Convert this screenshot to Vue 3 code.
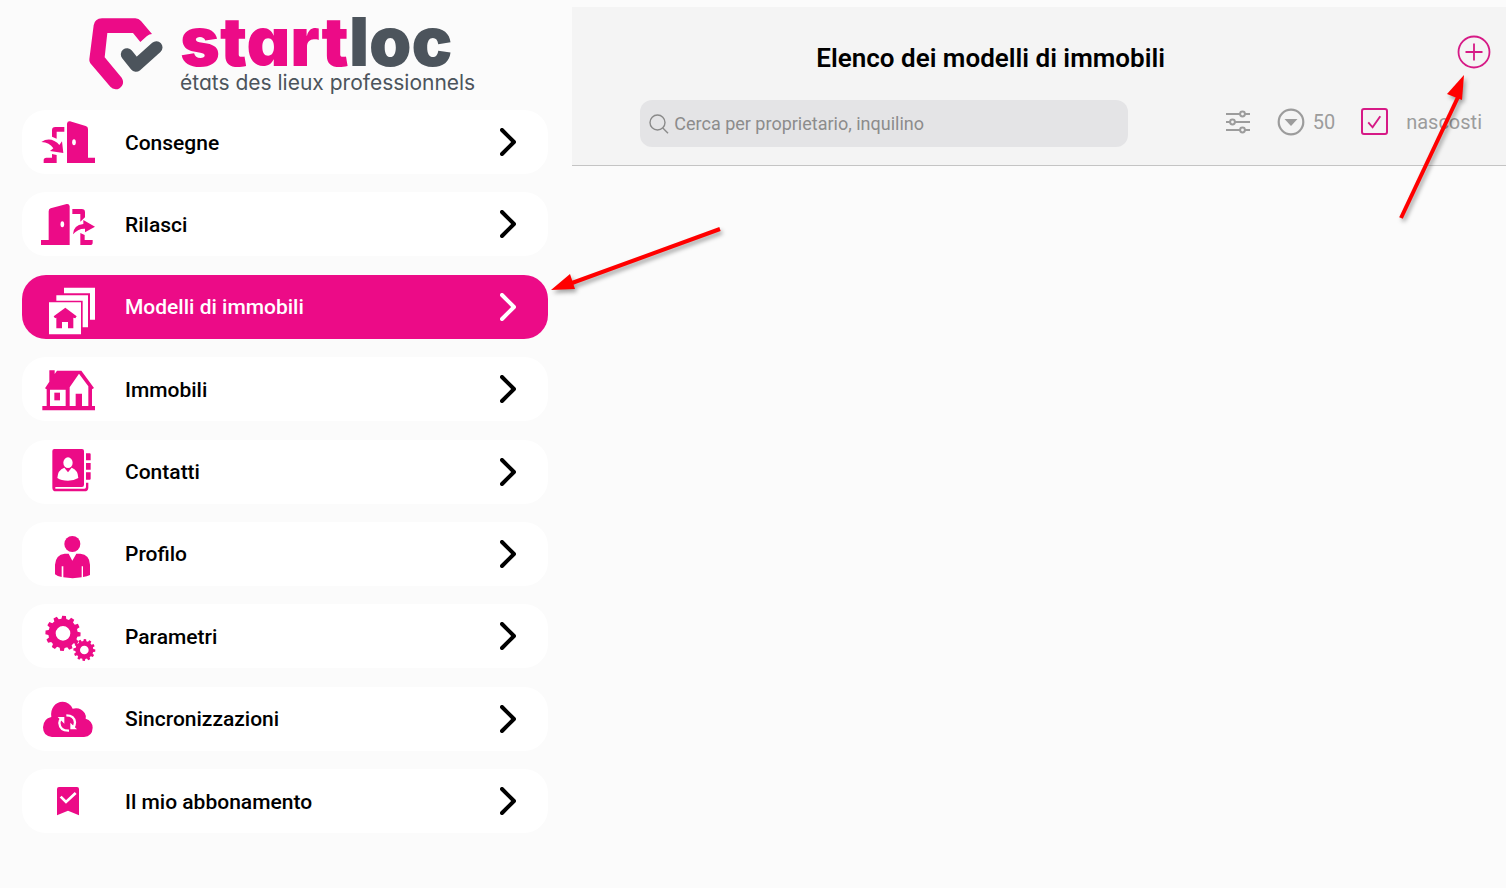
<script setup>
import { ref } from 'vue'

const items = [
  { id: 'consegne', label: 'Consegne', box: '48 15 192 192' },
  { id: 'rilasci', label: 'Rilasci', box: '48 261 192 192' },
  { id: 'modelli', label: 'Modelli di immobili', box: '48 29 192 192' },
  { id: 'immobili', label: 'Immobili', box: '48 276 192 192' },
  { id: 'contatti', label: 'Contatti', box: '48 29 192 192' },
  { id: 'profilo', label: 'Profilo', box: '48 276 192 192' },
  { id: 'parametri', label: 'Parametri', box: '48 27 192 192' },
  { id: 'sync', label: 'Sincronizzazioni', box: '48 276 192 192' },
  { id: 'abbonamento', label: 'Il mio abbonamento', box: '48 27 192 192' },
]
const active = ref('modelli')
const search = ref('')
const showHidden = ref(true)

function gear(cx, cy, outer, body, hole, teeth) {
  const pts = []
  const step = (Math.PI * 2) / teeth
  for (let i = 0; i < teeth; i++) {
    const a = i * step - Math.PI / 2 + 0.06
    for (const [r, k] of [[body, -0.32], [outer, -0.2], [outer, 0.2], [body, 0.32]]) {
      pts.push(`${(cx + r * Math.cos(a + k * step)).toFixed(1)} ${(cy + r * Math.sin(a + k * step)).toFixed(1)}`)
    }
  }
  return `M${pts.join('L')}ZM${cx - hole} ${cy}a${hole} ${hole} 0 1 0 ${hole * 2} 0a${hole} ${hole} 0 1 0 ${-hole * 2} 0Z`
}
const bigGear = gear(129, 115, 53, 44, 22, 12)
const smallGear = gear(193, 165, 33, 27, 13, 12)
</script>

<template>
  <div class="app">
    <aside class="side">
      <div class="logo">
        <svg class="mark" viewBox="54 51 228 222" aria-hidden="true">
          <path fill="#ec0b87" d="M96 55H196Q206 55 213 63L246 102Q238 102 231 108L211 126L189 99H112L104 172L155 233Q163 246 156 257Q149 268 137 268Q127 267 121 260L61 190Q57 185 58 178L71 76Q74 56 96 55Z" />
          <path fill="none" stroke="#4c545c" stroke-width="37" stroke-linecap="round" stroke-linejoin="round" d="M171 163L198 197L259 142" />
        </svg>
        <div class="words">
          <div class="brand">start<span>loc</span></div>
          <div class="tagline">états des lieux professionnels</div>
        </div>
      </div>

      <nav class="menu">
        <a
          v-for="item in items"
          :key="item.id"
          href="#"
          class="item"
          :class="{ active: item.id === active }"
          @click.prevent="active = item.id"
        >
          <svg class="icon" :viewBox="item.box" aria-hidden="true">
            <g v-if="item.id === 'consegne'" fill="currentColor">
              <path d="M141 56Q142 48 150 49L197 63Q204 65 204 72V158H225V174H141Z" />
              <ellipse cx="162" cy="112" rx="5.500" ry="9" fill="#fff" />
              <path d="M133 66V80H110V101L96 95V76Q96 66 106 66Z" />
              <path d="M64 111Q84 98 103 108Q113 113 118 120L126 109L130 144L90 138L100 130Q89 112 64 111Z" />
              <path d="M96 147L110 150V174H71V166Q71 158 79 158H96Z" />
            </g>
            <g v-else-if="item.id === 'rilasci'" fill="currentColor">
              <path d="M149 304Q148 296 140 297L92 310Q86 312 86 319V405H63V420H149Z" />
              <ellipse cx="127" cy="358" rx="5.500" ry="9" fill="#fff" />
              <path d="M157 312H185Q195 312 195 322V337L181 350V327H157Z" />
              <path d="M159 388Q160 360 190 357V345L225 365L195 382V371Q174 370 159 388Z" />
              <path d="M181 384L194 390V405H218V413Q218 420 210 420H181Z" />
            </g>
            <g v-else-if="item.id === 'modelli'" fill="currentColor">
              <path d="M132 67H225V163H210V84H132Z" />
              <path d="M109 90H204V186H188V106H109Z" />
              <path fill-rule="evenodd" d="M87 111H183V207H87ZM136 127L101 153L105 159L109 157V189H126V170H144V189H160V157L166 159L170 153Z" />
            </g>
            <g v-else-if="item.id === 'immobili'" fill="currentColor">
              <path fill-rule="evenodd" d="M88 316H104V327L111 317H184L222 369L216 373V423H225V436H67V423H80V373L75 370L88 350ZM90 374V423H137V374ZM149 367V423H167V386H186V423H205V364L177 326Z" />
              <path d="M103 383H120V406H103Z" />
            </g>
            <g v-else-if="item.id === 'contatti'" fill="currentColor">
              <path d="M103 56H186Q192 56 192 62V163Q192 170 186 170H106V175H193Q198 175 198 170V157H205V172Q205 183 193 183H108Q97 183 97 172V62Q97 56 103 56ZM198 69H209Q212 69 212 72V90H198ZM198 98H212V118H198ZM198 126H212V145Q212 148 209 148H198Z" />
              <ellipse cx="144" cy="97" rx="14" ry="16" fill="#fff" />
              <path fill="#fff" d="M133 112L144 126L155 112Q174 119 175 143Q162 151 144 151Q124 151 112 143Q113 119 133 112Z" />
            </g>
            <g v-else-if="item.id === 'profilo'" fill="currentColor">
              <circle cx="157" cy="342" r="24" />
              <path d="M134 371H146L157 392L169 371H181Q209 374 210 404V435Q201 440 189 441V409H185V442Q158 447 130 442V409H125V441Q112 439 105 433V404Q107 374 134 371Z" />
            </g>
            <g v-else-if="item.id === 'parametri'" fill="currentColor" fill-rule="evenodd">
              <path :d="bigGear" />
              <path :d="smallGear" />
            </g>
            <g v-else-if="item.id === 'sync'">
              <path fill="currentColor" d="M96 426Q69 424 69 397Q70 371 94 366C90 340 106 320 128 320Q149 321 158 341Q181 335 194 354Q199 362 197 371Q217 377 218 398Q217 424 192 426Z" />
              <g fill="none" stroke="#fff" stroke-width="7">
                <path d="M139 361Q163 361 165 382Q165 391 159 399" />
                <path d="M147 407Q120 408 118 384Q118 377 124 370" />
              </g>
              <path fill="#fff" d="M113 366H133V386ZM151 383V403H171Z" />
            </g>
            <g v-else>
              <path fill="currentColor" d="M111 87Q111 81 117 81H171Q177 81 177 87V166L144 152L111 166Z" />
              <path fill="none" stroke="#fff" stroke-width="8" d="M122 110L138 126L167 99" />
            </g>
          </svg>
          <span class="label">{{ item.label }}</span>
          <svg class="chevron" viewBox="0 0 16 28" aria-hidden="true">
            <path d="M2 2L14 14L2 26" />
          </svg>
          <svg v-if="item.id === 'modelli'" class="arrow arrow-item" viewBox="0 0 180 72" aria-hidden="true">
            <path d="M172 6L24 60" />
            <polygon points="3,67 22,51 27,66" />
          </svg>
        </a>
      </nav>
    </aside>

    <main class="content">
      <header class="head">
        <div class="title-row">
          <h1>Elenco dei modelli di immobili</h1>
          <button class="add" type="button" aria-label="Aggiungi">
            <svg viewBox="0 0 34 34" aria-hidden="true">
              <circle cx="17" cy="17" r="15.500" />
              <path d="M8.500 17H25.500M17 8.500V25.500" />
            </svg>
          </button>
        </div>
        <div class="tools">
          <label class="search">
            <svg viewBox="0 0 20 20" aria-hidden="true">
              <circle cx="8.500" cy="8.500" r="7.500" />
              <path d="M13.800 14L19 19.300" />
            </svg>
            <input v-model="search" type="text" placeholder="Cerca per proprietario, inquilino" aria-label="Cerca" />
          </label>
          <div class="filters">
            <button class="plain" type="button" aria-label="Filtri">
              <svg class="sliders" viewBox="0 0 26 24" aria-hidden="true">
                <path d="M1 4H15M20 4H25M1 12H5M10 12H25M1 20H15M20 20H25" />
                <circle cx="17.500" cy="4" r="2.400" />
                <circle cx="7.500" cy="12" r="2.400" />
                <circle cx="17.500" cy="20" r="2.400" />
              </svg>
            </button>
            <button class="plain count" type="button">
              <svg class="drop" viewBox="0 0 28 28" aria-hidden="true">
                <circle cx="14" cy="14" r="12.300" />
                <path d="M7.500 11H20.500L14 18Z" />
              </svg>
              50
            </button>
            <label class="hidden-toggle">
              <span class="box">
                <input v-model="showHidden" type="checkbox" />
                <svg v-if="showHidden" viewBox="0 0 28 28" aria-hidden="true">
                  <path d="M7.500 15L12 20L20 8.500" />
                </svg>
              </span>
              nascosti
            </label>
          </div>
        </div>
        <svg class="arrow arrow-add" viewBox="0 0 80 160" aria-hidden="true">
          <path d="M6 150L64 27" />
          <polygon points="69,7 52,26 67,32" />
        </svg>
      </header>
    </main>
  </div>
</template>

<style>
body {
  margin: 0;
  background: #fbfbfb;
}
</style>

<style scoped>
.app {
  display: grid;
  grid-template-columns: 38% 1fr;
  min-height: 100vh;
  font-family: Roboto, "Liberation Sans", sans-serif;
  color: #000;
}
.side {
  display: flex;
  flex-direction: column;
  box-sizing: border-box;
  padding: 0 24px 55px 22px;
}
.logo {
  display: flex;
  gap: 16px;
  height: 110px;
  padding-left: 66px;
}
.mark {
  width: 76px;
  height: 74px;
  margin-top: 17px;
}
.words {
  font-family: Inter, "DejaVu Sans", sans-serif;
  font-feature-settings: "cv11";
  font-optical-sizing: none;
  color: #4c545c;
  white-space: nowrap;
}
.brand {
  font-size: 68px;
  font-weight: 900;
  line-height: 60px;
  margin-top: 11px;
  color: #ec0b87;
}
.brand span {
  color: #4c545c;
}
.tagline {
  font-size: 21px;
  line-height: 24px;
}
.menu {
  flex: 1;
  display: flex;
  flex-direction: column;
  justify-content: space-between;
}
.item {
  position: relative;
  display: flex;
  align-items: center;
  height: 64px;
  padding: 0 32px 0 14px;
  border-radius: 24px;
  background: #fff;
  color: #000;
  text-decoration: none;
}
.icon {
  width: 64px;
  height: 64px;
  color: #ec0b87;
}
.label {
  flex: 1;
  padding-top: 1px;
  margin-left: 25px;
  font-size: 21px;
  font-weight: 500;
  line-height: 28px;
}
.chevron {
  width: 16px;
  height: 28px;
  fill: none;
  stroke: currentColor;
  stroke-width: 4;
  stroke-linecap: round;
  stroke-linejoin: round;
}
.active {
  background: #ec0b87;
  color: #fff;
}
.active .icon {
  color: #fff;
}
.arrow {
  position: absolute;
  z-index: 2;
  overflow: visible;
  pointer-events: none;
  fill: red;
  filter: drop-shadow(2px 3px 2px rgba(0, 0, 0, 0.35));
}
.arrow path {
  stroke: red;
  stroke-width: 4;
}
.arrow-item {
  left: 100%;
  bottom: 44px;
  width: 180px;
  height: 72px;
}
.head {
  position: relative;
  box-sizing: border-box;
  margin-top: 7px;
  height: 159px;
  border-bottom: 1px solid #c4c4c4;
  background: #f4f4f4;
}
.title-row {
  display: flex;
  align-items: flex-start;
  gap: 48px;
  padding: 28px 15px 0 0;
}
h1 {
  flex: 1;
  margin: 0;
  padding-top: 6px;
  text-align: center;
  font-size: 26px;
  font-weight: 600;
  line-height: 34px;
}
button {
  border: 0;
  padding: 0;
  background: none;
  font: inherit;
  color: inherit;
  cursor: pointer;
}
.add {
  width: 34px;
  height: 34px;
}
.add svg {
  display: block;
  fill: none;
  stroke: #d61a86;
  stroke-width: 1.8;
}
.tools {
  display: flex;
  justify-content: space-between;
  padding: 25px 24px 0 68px;
}
.search {
  display: flex;
  align-items: center;
  box-sizing: border-box;
  width: 488px;
  height: 47px;
  padding: 0 9px;
  gap: 5px;
  border-radius: 12px;
  background: #e4e4e6;
}
.search svg {
  width: 20px;
  height: 20px;
  fill: none;
  stroke: #8a8a8a;
  stroke-width: 1.4;
}
.search input {
  flex: 1;
  min-width: 0;
  border: 0;
  padding: 0;
  outline: 0;
  background: none;
  font: 18px/24px Roboto, "Liberation Sans", sans-serif;
  color: #333;
}
.search input::placeholder {
  color: #8c8c8c;
  opacity: 1;
}
.filters {
  display: flex;
  align-items: center;
  height: 43px;
  gap: 26px;
  color: #9c9c9c;
  font-size: 20px;
  line-height: 24px;
}
.plain {
  display: flex;
  align-items: center;
}
.sliders {
  width: 26px;
  height: 24px;
  fill: none;
  stroke: currentColor;
  stroke-width: 2;
}
.count {
  gap: 8px;
}
.drop {
  width: 28px;
  height: 28px;
  fill: currentColor;
}
.drop circle {
  fill: none;
  stroke: currentColor;
  stroke-width: 2.2;
}
.hidden-toggle {
  display: flex;
  align-items: center;
  gap: 18px;
}
.box {
  display: grid;
}
.box > * {
  grid-area: 1 / 1;
}
.box input {
  appearance: none;
  box-sizing: border-box;
  width: 27px;
  height: 27px;
  margin: 0;
  border: 2px solid #d61a86;
  border-radius: 3px;
}
.box svg {
  width: 27px;
  height: 27px;
  fill: none;
  stroke: #d61a86;
  stroke-width: 2;
  pointer-events: none;
}
.arrow-add {
  top: 61px;
  right: 31px;
  width: 80px;
  height: 160px;
}
</style>
